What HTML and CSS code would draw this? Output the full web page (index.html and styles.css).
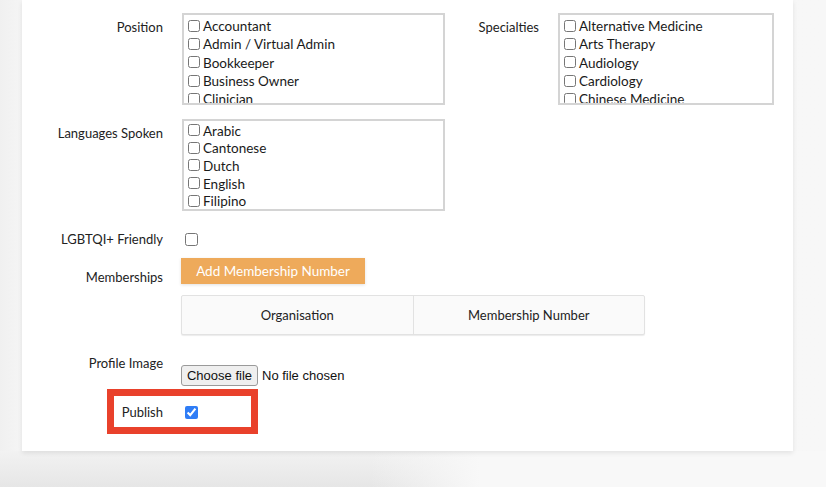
FILE: index.html
```html
<!DOCTYPE html>
<html lang="en">
<head>
<meta charset="utf-8">
<title>Profile form</title>
<link rel="stylesheet" href="styles.css">
</head>
<body>
<div class="page">
  <div class="card-wrap">
    <form class="card">
      <div class="row row-1">
        <div class="lbl">Position</div>
        <div class="ctl">
          <div class="multi multi-wide">
            <label class="opt"><input type="checkbox"> Accountant</label>
            <label class="opt"><input type="checkbox"> Admin / Virtual Admin</label>
            <label class="opt"><input type="checkbox"> Bookkeeper</label>
            <label class="opt"><input type="checkbox"> Business Owner</label>
            <label class="opt"><input type="checkbox"> Clinician</label>
          </div>
        </div>
        <div class="lbl lbl-2">Specialties</div>
        <div class="ctl">
          <div class="multi multi-narrow">
            <label class="opt"><input type="checkbox"> Alternative Medicine</label>
            <label class="opt"><input type="checkbox"> Arts Therapy</label>
            <label class="opt"><input type="checkbox"> Audiology</label>
            <label class="opt"><input type="checkbox"> Cardiology</label>
            <label class="opt"><input type="checkbox"> Chinese Medicine</label>
          </div>
        </div>
      </div>

      <div class="row row-2">
        <div class="lbl">Languages Spoken</div>
        <div class="ctl">
          <div class="multi multi-wide multi-lang">
            <label class="opt"><input type="checkbox"> Arabic</label>
            <label class="opt"><input type="checkbox"> Cantonese</label>
            <label class="opt"><input type="checkbox"> Dutch</label>
            <label class="opt"><input type="checkbox"> English</label>
            <label class="opt"><input type="checkbox"> Filipino</label>
          </div>
        </div>
      </div>

      <div class="row row-3">
        <div class="lbl">LGBTQI+ Friendly</div>
        <div class="ctl ctl-check"><input type="checkbox" class="single"></div>
      </div>

      <div class="row row-4">
        <div class="lbl lbl-members">Memberships</div>
        <div class="ctl"><button type="button" class="btn-add">Add Membership Number</button></div>
      </div>

      <div class="row row-5">
        <div class="lbl"></div>
        <div class="ctl">
          <div class="tbl">
            <div class="th">Organisation</div>
            <div class="th">Membership Number</div>
          </div>
        </div>
      </div>

      <div class="row row-6">
        <div class="lbl">Profile Image</div>
        <div class="ctl ctl-file">
          <span class="file-btn">Choose file</span>
          <span class="file-name">No file chosen</span>
        </div>
      </div>

      <div class="row row-7">
        <div class="highlight"></div>
        <div class="lbl">Publish</div>
        <div class="ctl ctl-check"><input type="checkbox" class="single checked" checked></div>
      </div>
    </form>
  </div>
  <div class="footer"></div>
  <div class="bottom-strip"></div>
</div>
</body>
</html>
```

FILE: styles.css
```css
* { box-sizing: border-box; }

html, body {
  margin: 0;
  padding: 0;
  height: 490px;
  overflow: hidden;
}

body {
  background: #f7f7f7;
  font-family: Lato, "Open Sans", "Liberation Sans", sans-serif;
  color: #222;
}

.page {
  display: flex;
  flex-direction: column;
  width: 826px;
  height: 490px;
}

.card-wrap {
  padding-left: 22px;
  background: linear-gradient(to right, #f0f0f0 0, #f5f5f5 22px, #f7f7f7 100%);
}

.card {
  position: relative;
  width: 771px;
  height: 451px;
  background: #fff;
  box-shadow: 0 2px 5px rgba(0, 0, 0, 0.09);
  padding-top: 13px;
  margin: 0;
}

.footer {
  height: 36px;
  background:
    linear-gradient(to right, rgba(248, 248, 248, 0) 0, rgba(248, 248, 248, 0) 370px, #f8f8f8 480px),
    linear-gradient(to bottom, #f2f2f2, #e6e6e6);
}

.bottom-strip {
  height: 3px;
  background: #fff;
}

.row {
  display: flex;
  align-items: flex-start;
  position: relative;
}

.lbl {
  width: 141px;
  flex: none;
  text-align: right;
  font-size: 13px;
  line-height: 18px;
  color: #222;
}

.lbl-2 {
  width: 94px;
}

.ctl {
  margin-left: 19px;
}

.row-1 .lbl { padding-top: 5px; }
.row-2 { margin-top: 14px; }
.row-2 .lbl { padding-top: 5px; }

.multi {
  height: 92px;
  border: 2px solid #d4d4d4;
  overflow: hidden;
  padding: 2px 4px;
  display: flex;
  flex-direction: column;
}

.multi-wide { width: 263px; }
.multi-narrow { width: 216px; }
.multi-lang { padding-top: 1px; }
.multi-lang .opt { height: 17.6px; }

.opt {
  display: flex;
  align-items: center;
  height: 18.3px;
  flex: none;
  font-size: 13.5px;
  color: #1a1a1a;
  white-space: nowrap;
}

.opt input {
  width: 12px;
  height: 12px;
  margin: 0 3px 1px 0;
}

.row-3 {
  margin-top: 18px;
  height: 20px;
}

.row-3 .lbl { padding-top: 1px; }

.ctl-check {
  padding-left: 3px;
  padding-top: 4px;
}

.single {
  width: 13px;
  height: 13px;
  margin: 0;
  display: block;
}

.checked {
  accent-color: #2f7df6;
}

.row-4 { margin-top: 9px; }
.lbl-members { padding-top: 10px; }

.btn-add {
  display: block;
  margin-left: -1px;
  width: 184px;
  height: 26px;
  border: 0;
  background: #eeaa5b;
  color: #fff;
  font-family: Lato, "Open Sans", "Liberation Sans", sans-serif;
  font-size: 13.5px;
  padding: 0;
  box-shadow: 0 1px 3px rgba(0, 0, 0, 0.12);
}

.row-5 { margin-top: 9px; }

.tbl {
  display: flex;
  margin-left: -1px;
  width: 464px;
  height: 40px;
  background: #fafafa;
  border: 1px solid #e2e2e2;
  border-radius: 2px;
  box-shadow: 0 1px 1px rgba(0, 0, 0, 0.08);
}

.th {
  flex: 1;
  display: flex;
  align-items: center;
  justify-content: center;
  font-size: 13px;
  color: #222;
}

.th + .th {
  border-left: 1px solid #e2e2e2;
}

.row-6 { margin-top: 19px; }

.ctl-file {
  padding-top: 11px;
  display: flex;
  align-items: center;
  margin-left: 18px;
}

.file-btn {
  display: inline-flex;
  align-items: center;
  justify-content: center;
  width: 77px;
  height: 21px;
  background: #efefef;
  border: 1px solid #9a9a9a;
  border-radius: 3px;
  font-family: "Liberation Sans", Arial, sans-serif;
  font-size: 13px;
  color: #111;
}

.file-name {
  margin-left: 4px;
  font-family: "Liberation Sans", Arial, sans-serif;
  font-size: 13px;
  color: #111;
}

.row-7 {
  margin-top: 17px;
  height: 18px;
}

.row-7 .ctl-check { padding-top: 3px; }

.highlight {
  position: absolute;
  left: 85px;
  top: -14px;
  width: 151px;
  height: 45px;
  border: 7px solid #e9412b;
  pointer-events: none;
}
```
